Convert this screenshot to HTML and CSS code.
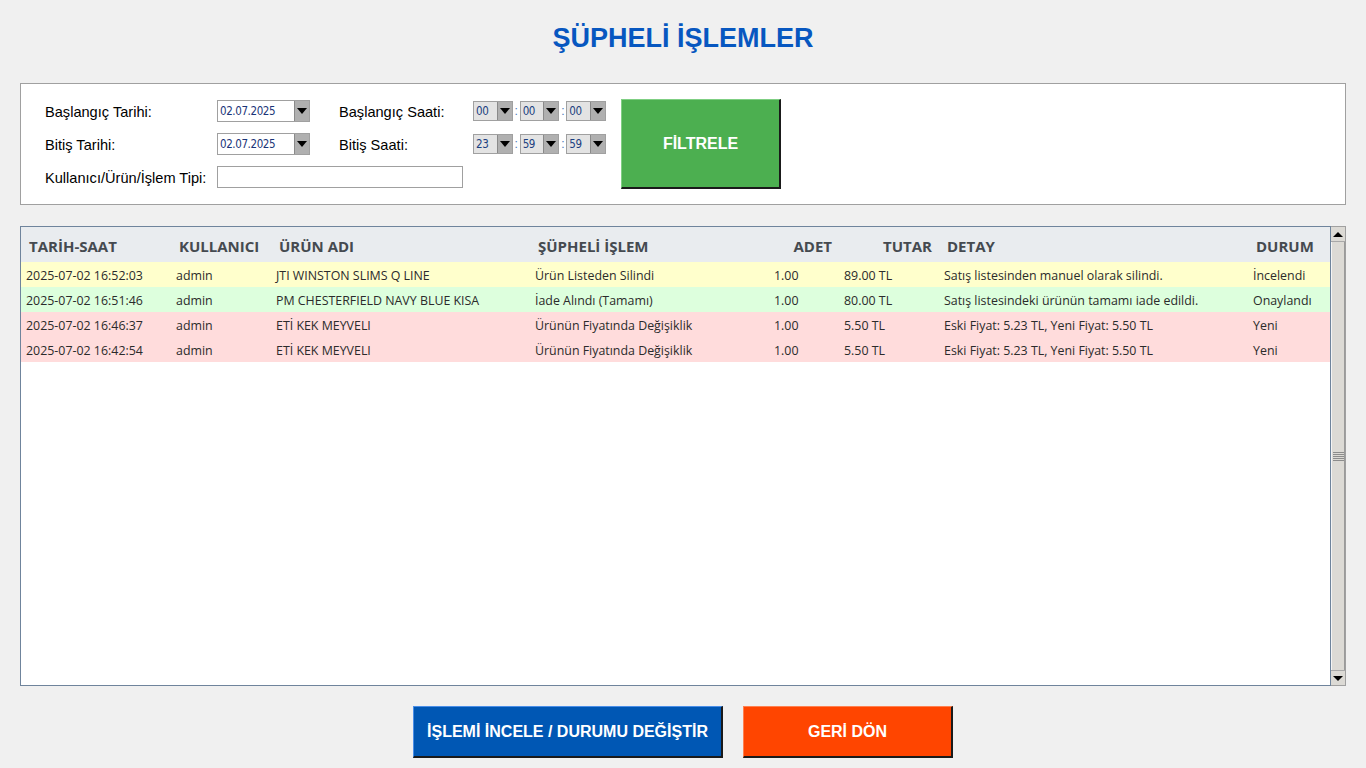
FILE: index.html
```html
<!DOCTYPE html>
<html lang="tr">
<head>
<meta charset="utf-8">
<title>Şüpheli İşlemler</title>
<link rel="stylesheet" href="styles.css">
</head>
<body>
<div class="page">
  <h1 class="title">ŞÜPHELİ İŞLEMLER</h1>

  <section class="filter-panel">
    <div class="filter-grid">
      <label class="lbl">Başlangıç Tarihi:</label>
      <div class="date-combo"><span class="val">02.07.2025</span><span class="drop"><i class="tri"></i></span></div>
      <label class="lbl">Başlangıç Saati:</label>
      <div class="time-group">
        <div class="time-combo"><span class="val">00</span><span class="drop"><i class="tri"></i></span></div>
        <span class="colon">:</span>
        <div class="time-combo"><span class="val">00</span><span class="drop"><i class="tri"></i></span></div>
        <span class="colon">:</span>
        <div class="time-combo"><span class="val">00</span><span class="drop"><i class="tri"></i></span></div>
      </div>

      <label class="lbl">Bitiş Tarihi:</label>
      <div class="date-combo"><span class="val">02.07.2025</span><span class="drop"><i class="tri"></i></span></div>
      <label class="lbl">Bitiş Saati:</label>
      <div class="time-group">
        <div class="time-combo"><span class="val">23</span><span class="drop"><i class="tri"></i></span></div>
        <span class="colon">:</span>
        <div class="time-combo"><span class="val">59</span><span class="drop"><i class="tri"></i></span></div>
        <span class="colon">:</span>
        <div class="time-combo"><span class="val">59</span><span class="drop"><i class="tri"></i></span></div>
      </div>

      <label class="lbl">Kullanıcı/Ürün/İşlem Tipi:</label>
      <div class="text-input"></div>
    </div>
    <button class="btn btn-filter">FİLTRELE</button>
  </section>

  <section class="list-wrap">
    <div class="list">
      <div class="row head">
        <div class="c c1">TARİH-SAAT</div>
        <div class="c c2">KULLANICI</div>
        <div class="c c3">ÜRÜN ADI</div>
        <div class="c c4">ŞÜPHELİ İŞLEM</div>
        <div class="c c5 r">ADET</div>
        <div class="c c6 r">TUTAR</div>
        <div class="c c7">DETAY</div>
        <div class="c c8">DURUM</div>
      </div>
      <div class="row yellow">
        <div class="c c1">2025-07-02 16:52:03</div>
        <div class="c c2">admin</div>
        <div class="c c3">JTI WINSTON SLIMS Q LINE</div>
        <div class="c c4">Ürün Listeden Silindi</div>
        <div class="c c5">1.00</div>
        <div class="c c6">89.00 TL</div>
        <div class="c c7">Satış listesinden manuel olarak silindi.</div>
        <div class="c c8">İncelendi</div>
      </div>
      <div class="row green">
        <div class="c c1">2025-07-02 16:51:46</div>
        <div class="c c2">admin</div>
        <div class="c c3">PM CHESTERFIELD NAVY BLUE KISA</div>
        <div class="c c4">İade Alındı (Tamamı)</div>
        <div class="c c5">1.00</div>
        <div class="c c6">80.00 TL</div>
        <div class="c c7">Satış listesindeki ürünün tamamı iade edildi.</div>
        <div class="c c8">Onaylandı</div>
      </div>
      <div class="row red">
        <div class="c c1">2025-07-02 16:46:37</div>
        <div class="c c2">admin</div>
        <div class="c c3">ETİ KEK MEYVELI</div>
        <div class="c c4">Ürünün Fiyatında Değişiklik</div>
        <div class="c c5">1.00</div>
        <div class="c c6">5.50 TL</div>
        <div class="c c7">Eski Fiyat: 5.23 TL, Yeni Fiyat: 5.50 TL</div>
        <div class="c c8">Yeni</div>
      </div>
      <div class="row red">
        <div class="c c1">2025-07-02 16:42:54</div>
        <div class="c c2">admin</div>
        <div class="c c3">ETİ KEK MEYVELI</div>
        <div class="c c4">Ürünün Fiyatında Değişiklik</div>
        <div class="c c5">1.00</div>
        <div class="c c6">5.50 TL</div>
        <div class="c c7">Eski Fiyat: 5.23 TL, Yeni Fiyat: 5.50 TL</div>
        <div class="c c8">Yeni</div>
      </div>
    </div>
    <div class="scrollbar">
      <div class="sb-btn"><i class="tri up"></i></div>
      <div class="sb-thumb"><span class="grip"></span></div>
      <div class="sb-btn"><i class="tri"></i></div>
    </div>
  </section>

  <div class="actions">
    <button class="btn btn-blue">İŞLEMİ İNCELE / DURUMU DEĞİŞTİR</button>
    <button class="btn btn-orange">GERİ DÖN</button>
  </div>
</div>
</body>
</html>
```

FILE: styles.css
```css
* { box-sizing: border-box; }

html, body {
  margin: 0;
  padding: 0;
  background: #f0f0f0;
}

body {
  font-family: "Liberation Sans", Arial, sans-serif;
  color: #000;
  width: 1366px;
  height: 768px;
  overflow: hidden;
}

.page {
  padding: 0 20px;
  display: flex;
  flex-direction: column;
}

.title {
  margin: 0;
  height: 83px;
  padding-top: 22px;
  text-align: center;
  font-size: 27px;
  line-height: 32px;
  font-weight: bold;
  color: #0757c0;
}

/* ---------- Filter panel ---------- */
.filter-panel {
  height: 122px;
  background: #fff;
  border: 1px solid #a0a0a0;
  display: flex;
  align-items: flex-start;
  padding: 16px 0 0 24px;
  gap: 15px;
}

.filter-grid {
  display: grid;
  grid-template-columns: 172px 122px 134px 133px;
  grid-auto-rows: 22px;
  row-gap: 11px;
  align-items: center;
}

.lbl {
  font-size: 14.6px;
  line-height: 22px;
  padding-top: 1px;
  color: #000;
  white-space: nowrap;
}

.date-combo {
  width: 93px;
  height: 22px;
  border: 1px solid #a0a0a0;
  background: #fff;
  display: flex;
  align-items: stretch;
}

.date-combo .val,
.time-combo .val {
  flex: 1;
  font-family: "DejaVu Sans Condensed", "Liberation Sans", sans-serif;
  font-size: 11.5px;
  line-height: 20px;
  padding-left: 2px;
  color: #1b3578;
  letter-spacing: -0.4px;
}

.drop {
  width: 15px;
  background: #b0b0b0;
  border-left: 1px solid #8a8a8a;
  display: flex;
  align-items: center;
  justify-content: center;
}

.tri {
  display: block;
  width: 0;
  height: 0;
  border-left: 5px solid transparent;
  border-right: 5px solid transparent;
  border-top: 6px solid #000;
}

.tri.up {
  border-top: none;
  border-bottom: 6px solid #000;
}

.time-group {
  display: flex;
  align-items: center;
  height: 20px;
}

.time-combo {
  width: 40px;
  height: 20px;
  border: 1px solid #a0a0a0;
  background: #e3e3e3;
  display: flex;
  align-items: stretch;
}

.time-combo .val {
  line-height: 18px;
  color: #1b3f80;
}

.time-combo .drop {
  width: 15px;
}

.colon {
  width: 7px;
  text-align: center;
  font-size: 12px;
  color: #4a78b8;
  line-height: 18px;
}

.text-input {
  grid-column: 2 / span 2;
  width: 246px;
  height: 22px;
  border: 1px solid #a0a0a0;
  background: #fff;
}

/* ---------- Buttons ---------- */
.btn {
  font-family: "Liberation Sans", Arial, sans-serif;
  font-weight: bold;
  font-size: 16px;
  color: #fff;
  cursor: pointer;
  padding: 0;
  border-style: solid;
  border-width: 1px 2px 2px 1px;
}

.btn-filter {
  width: 160px;
  height: 90px;
  margin-top: -1px;
  background: #4caf50;
  border-color: #7fcf83 #1a1a1a #1a1a1a #7fcf83;
}

.btn-blue {
  width: 310px;
  height: 52px;
  background: #0057b4;
  border-color: #4a8ee8 #1a1a1a #1a1a1a #4a8ee8;
}

.btn-orange {
  width: 210px;
  height: 52px;
  background: #ff4500;
  border-color: #ff8050 #1a1a1a #1a1a1a #ff8050;
}

/* ---------- List ---------- */
.list-wrap {
  margin-top: 21px;
  height: 460px;
  display: flex;
}

.list {
  flex: 1;
  border: 1px solid #6f849c;
  background: #fff;
  font-family: "Open Sans", "Noto Sans", sans-serif;
}

.row {
  display: flex;
  height: 25px;
  align-items: center;
  font-size: 12.4px;
  color: #2b2b2b;
  padding-top: 1px;
}

.row.head {
  height: 35px;
  background: #e9ecef;
  font-size: 15px;
  font-weight: bold;
  color: #454a50;
  padding-top: 2px;
}

.row.yellow { background: #ffffcc; }
.row.green { background: #ddffdd; }
.row.red { background: #ffdcdc; }

.c {
  padding-left: 5px;
  white-space: nowrap;
  overflow: hidden;
}

.head .c { padding-left: 8px; }
.head .c.r { text-align: right; padding-left: 0; padding-right: 7px; }

.c1 { width: 150px; }
.c2 { width: 100px; }
.c3 { width: 259px; }
.c4 { width: 239px; }
.c5 { width: 70px; }
.c6 { width: 100px; }
.c7 { width: 309px; }
.c8 { flex: 1; }

.scrollbar {
  width: 15px;
  border: 1px solid #a0a0a0;
  border-left: none;
  background: #dcdad5;
  display: flex;
  flex-direction: column;
}

.sb-btn {
  height: 15px;
  display: flex;
  align-items: center;
  justify-content: center;
  background: #dcdad5;
  border-bottom: 1px solid #a8a8a8;
}

.sb-btn:last-child {
  border-bottom: none;
  border-top: 1px solid #a8a8a8;
}

.sb-btn .tri {
  border-left-width: 5px;
  border-right-width: 5px;
  border-top-width: 5px;
}

.sb-btn .tri.up {
  border-bottom-width: 5px;
}

.sb-thumb {
  flex: 1;
  background: #dcdad5;
  border-left: 1px solid #f4f4f4;
  border-right: 1px solid #9a9a9a;
  display: flex;
  align-items: center;
  justify-content: center;
}

.grip {
  display: block;
  width: 11px;
  height: 9px;
  background: repeating-linear-gradient(to bottom, #8c8c8c 0 1px, transparent 1px 2px);
}

/* ---------- Actions ---------- */
.actions {
  margin-top: 20px;
  display: flex;
  justify-content: center;
  gap: 20px;
}
```
